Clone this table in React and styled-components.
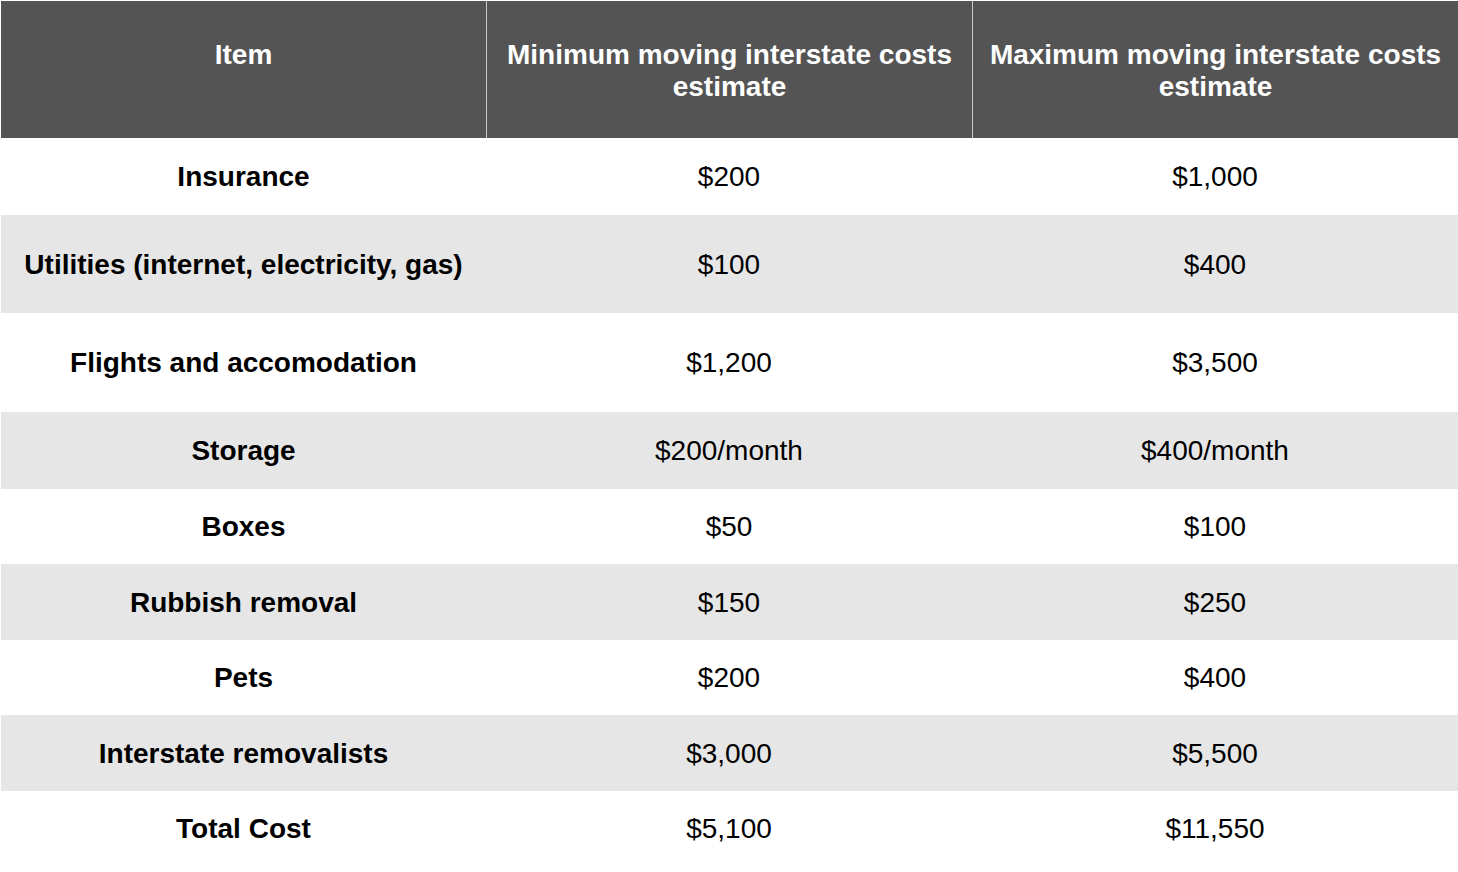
import React from "react";
import styled, { createGlobalStyle } from "styled-components";

const GlobalStyle = createGlobalStyle`
  html, body {
    margin: 0;
    padding: 0;
    background: #ffffff;
  }
  body {
    font-family: "Liberation Sans", Arial, sans-serif;
  }
`;

const Page = styled.div`
  width: 1458px;
  height: 872px;
  padding: 1px 0 0 1px;
  box-sizing: border-box;
  background: #ffffff;
`;

const Table = styled.div`
  display: flex;
  flex-direction: column;
  width: 1457px;
`;

const Row = styled.div`
  display: grid;
  grid-template-columns: 485px 486px 486px;
  height: ${(p) => p.$height}px;
  background: ${(p) => (p.$shaded ? "#e6e6e6" : "#ffffff")};
`;

const HeadRow = styled(Row)`
  background: #545454;
`;

const HeadCell = styled.div`
  display: flex;
  align-items: flex-start;
  justify-content: center;
  box-sizing: border-box;
  padding: 38px 10px 0;
  border-left: ${(p) => (p.$divider ? "1px solid #c9c9c9" : "none")};
  color: #ffffff;
  font-weight: 700;
  font-size: 28px;
  line-height: 32px;
  text-align: center;
`;

const Cell = styled.div`
  display: flex;
  align-items: center;
  justify-content: center;
  padding-top: 1px;
  color: #000000;
  font-weight: ${(p) => (p.$bold ? 700 : 400)};
  font-size: 28px;
  line-height: 32px;
  text-align: center;
  white-space: nowrap;
`;

const rows = [
  { item: "Insurance", min: "$200", max: "$1,000", h: 77 },
  { item: "Utilities (internet, electricity, gas)", min: "$100", max: "$400", h: 98 },
  { item: "Flights and accomodation", min: "$1,200", max: "$3,500", h: 99 },
  { item: "Storage", min: "$200/month", max: "$400/month", h: 77 },
  { item: "Boxes", min: "$50", max: "$100", h: 75 },
  { item: "Rubbish removal", min: "$150", max: "$250", h: 76 },
  { item: "Pets", min: "$200", max: "$400", h: 75 },
  { item: "Interstate removalists", min: "$3,000", max: "$5,500", h: 76 },
  { item: "Total Cost", min: "$5,100", max: "$11,550", h: 75 },
];

const App = () => {
  return (
    <Page>
      <GlobalStyle />
      <Table>
        <HeadRow $height={137}>
          <HeadCell>Item</HeadCell>
          <HeadCell $divider>Minimum moving interstate costs estimate</HeadCell>
          <HeadCell $divider>Maximum moving interstate costs estimate</HeadCell>
        </HeadRow>
        {rows.map((r, i) => (
          <Row key={r.item} $height={r.h} $shaded={i % 2 === 1}>
            <Cell $bold>{r.item}</Cell>
            <Cell>{r.min}</Cell>
            <Cell>{r.max}</Cell>
          </Row>
        ))}
      </Table>
    </Page>
  );
};

export default App;
